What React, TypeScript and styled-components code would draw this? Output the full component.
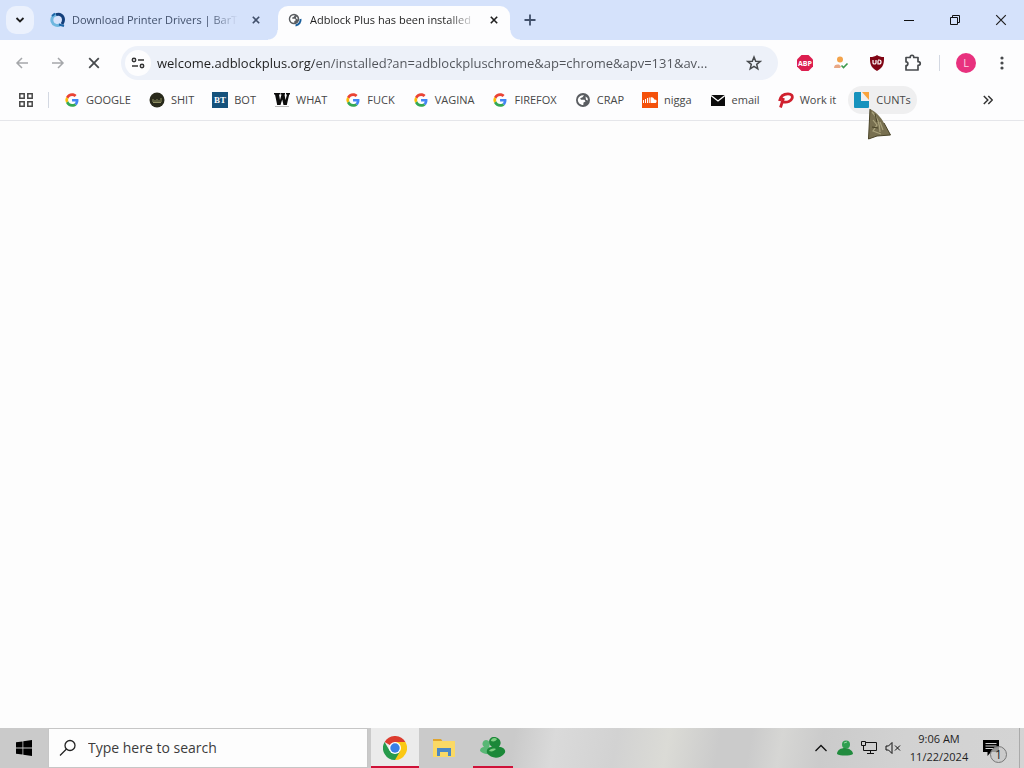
import React from 'react';
import styled, { createGlobalStyle } from 'styled-components';

const Global = createGlobalStyle`
  * { box-sizing: border-box; }
  body { margin: 0; background: #fdfdfd; font-family: "Open Sans", "Noto Sans", sans-serif; color: #1f1f1f; }
  button, input { font: inherit; color: inherit; border: 0; padding: 0; margin: 0; background: none; }
  svg { display: block; flex: none; }
`;

const Window = styled.div`
  min-height: 100vh;
  display: flex;
  flex-direction: column;
`;

const TabStrip = styled.header`
  height: 40px;
  display: flex;
  align-items: center;
  background: #d5e2fb;
  padding-left: 6px;
`;

const TabSearch = styled.button`
  width: 28px;
  height: 28px;
  border-radius: 10px;
  background: #ebf1fd;
  display: grid;
  place-items: center;
`;

const Tab = styled.div<{ $active?: boolean }>`
  position: relative;
  align-self: flex-end;
  flex: 0 1 232px;
  min-width: 0;
  height: 34px;
  margin-left: 6px;
  padding: 0 8px 6px 10px;
  display: flex;
  align-items: center;
  gap: 6px;
  border-radius: 10px 10px 0 0;
  background: ${p => (p.$active ? '#fdfdfe' : 'transparent')};
  color: ${p => (p.$active ? '#1f1f1f' : '#41506b')};
  &::before, &::after {
    content: "";
    display: ${p => (p.$active ? 'block' : 'none')};
    position: absolute;
    bottom: 0;
    width: 10px;
    height: 10px;
  }
  &::before { left: -10px; background: radial-gradient(circle at 0 0, transparent 9px, #fdfdfe 10px); }
  &::after { right: -10px; background: radial-gradient(circle at 100% 0, transparent 9px, #fdfdfe 10px); }
`;

const TabTitle = styled.span`
  flex: 1;
  min-width: 0;
  overflow: hidden;
  white-space: nowrap;
  font-size: 11px;
  line-height: 16px;
  mask-image: linear-gradient(to right, #000 calc(100% - 28px), transparent);
`;

const TabClose = styled.button`
  width: 16px;
  height: 16px;
  margin-left: 4px;
  display: grid;
  place-items: center;
`;

const NewTab = styled.button`
  width: 28px;
  height: 28px;
  margin-left: 6px;
  display: grid;
  place-items: center;
  color: #41506b;
`;

const WindowControls = styled.div`
  margin-left: auto;
  display: flex;
`;

const WindowButton = styled.button`
  width: 46px;
  height: 40px;
  display: grid;
  place-items: center;
`;

const Toolbar = styled.div`
  height: 46px;
  display: flex;
  align-items: center;
  padding: 0 4px;
  background: #fdfdfe;
`;

const ToolButton = styled.button`
  flex: none;
  width: 36px;
  height: 34px;
  display: grid;
  place-items: center;
  color: #474a4d;
  &:disabled { color: #a5a7aa; }
`;

const Omnibox = styled.form`
  flex: 1;
  min-width: 0;
  height: 34px;
  margin: 0 9px;
  display: flex;
  align-items: center;
  border-radius: 17px;
  background: #edf1f9;
  padding: 0 6px 0 4px;
`;

const SiteInfo = styled.button`
  flex: none;
  width: 26px;
  height: 26px;
  border-radius: 50%;
  background: #fdfdfe;
  display: grid;
  place-items: center;
`;

const Address = styled.input`
  flex: 1;
  min-width: 0;
  margin-left: 6px;
  font-size: 13px;
  line-height: 20px;
  outline: none;
  color: transparent;
  background: linear-gradient(to right, #1f1f1f 157px, #505359 157px);
  background-clip: text;
  -webkit-background-clip: text;
  text-overflow: ellipsis;
`;

const Divider = styled.span`
  flex: none;
  width: 1px;
  height: 16px;
  background: #d3d8e2;
  margin: 0 8px;
`;

const Avatar = styled.span`
  width: 20px;
  height: 20px;
  border-radius: 50%;
  background: #e8317e;
  color: #fbd3e4;
  font-size: 11px;
  line-height: 20px;
  text-align: center;
`;

const BookmarkBar = styled.nav`
  height: 35px;
  display: flex;
  align-items: flex-start;
  padding: 0 18px 0 8px;
  background: #fdfdfe;
  border-bottom: 1px solid #e5e6ea;
  color: #474747;
`;

const BarButton = styled.button`
  width: 36px;
  height: 28px;
  display: grid;
  place-items: center;
`;

const BarDivider = styled(Divider)`
  margin: 6px 9px 6px 4px;
`;

const Bookmarks = styled.div`
  flex: 1;
  min-width: 0;
  display: flex;
  gap: 6px;
`;

const Bookmark = styled.a<{ $hover?: boolean }>`
  flex: none;
  height: 28px;
  display: flex;
  align-items: center;
  gap: 6px;
  padding: 0 6px;
  border-radius: 14px;
  background: ${p => (p.$hover ? '#efeff0' : 'transparent')};
  color: inherit;
  text-decoration: none;
  font-size: 11px;
  line-height: 16px;
  white-space: nowrap;
`;

const Page = styled.main`
  flex: 1;
  background: #fdfdfd;
`;

const Pointer = styled.svg`
  position: absolute;
  left: 867px;
  top: 108px;
  pointer-events: none;
`;

const Taskbar = styled.footer`
  height: 40px;
  display: flex;
  background: linear-gradient(100deg, #cacaca 50%, #dadada 54%, #d2d2d2 60%, #dbdbd6 65%, #cbcbcb 70%, #cbcbcb 73%, #d6d6d4 76%, #cbcbcb 80%, #d2d2d2 88%, #d4d4d4);
`;

const StartButton = styled.button`
  width: 48px;
  display: grid;
  place-items: center;
`;

const SearchBox = styled.label`
  flex: 0 1 320px;
  min-width: 0;
  display: flex;
  align-items: center;
  gap: 11px;
  padding-left: 10px;
  margin-right: 3px;
  background: #fdfdfd;
  border: 1px solid #c6c6c6;
`;

const SearchInput = styled.input`
  flex: 1;
  min-width: 0;
  font-size: 14px;
  line-height: 20px;
  outline: none;
  &::placeholder { color: #3c3c3c; opacity: 1; }
`;

const TaskButton = styled.button<{ $active?: boolean; $running?: boolean }>`
  position: relative;
  width: 48px;
  margin-right: 1px;
  display: grid;
  place-items: center;
  background: ${p => (p.$active ? '#ebebeb' : 'transparent')};
  &::after {
    content: "";
    position: absolute;
    bottom: 0;
    left: ${p => (p.$active ? '0' : '4px')};
    right: ${p => (p.$active ? '0' : '4px')};
    height: 2px;
    background: ${p => (p.$active || p.$running ? '#cf1138' : 'transparent')};
  }
`;

const Tray = styled.div`
  margin-left: auto;
  display: flex;
  align-items: center;
`;

const TrayButton = styled.button`
  width: 24px;
  height: 40px;
  display: grid;
  place-items: center;
`;

const Clock = styled.time`
  width: 68px;
  text-align: center;
  font-size: 11px;
  line-height: 18px;
  white-space: nowrap;
`;

const ActionCenter = styled.button`
  position: relative;
  width: 46px;
  height: 40px;
  padding-right: 10px;
  display: grid;
  place-items: center;
`;

const Badge = styled.span`
  position: absolute;
  right: 12px;
  bottom: 5px;
  width: 17px;
  height: 17px;
  border: 1px solid #777;
  border-radius: 50%;
  background: rgba(200, 200, 200, 0.75);
  font-size: 12px;
  line-height: 15px;
  text-align: center;
`;

const ShowDesktop = styled.button`
  width: 5px;
  height: 40px;
  border-left: 1px solid #aaa;
`;

const Cross = ({ s = 8, w = 2 }: { s?: number; w?: number }) => (
  <svg width={s} height={s} viewBox="0 0 10 10" stroke="currentColor" strokeWidth={w} fill="none">
    <path d="M1 1l8 8M9 1L1 9" />
  </svg>
);

const Google = () => (
  <svg width="16" height="16" viewBox="0 0 48 48">
    <g transform="translate(4 4) scale(.84)">
      <path fill="#EA4335" d="M24 9.5c3.54 0 6.71 1.22 9.21 3.6l6.85-6.85C35.9 2.38 30.47 0 24 0 14.62 0 6.51 5.38 2.56 13.22l7.98 6.19C12.43 13.72 17.74 9.5 24 9.5z" />
      <path fill="#4285F4" d="M46.98 24.55c0-1.57-.15-3.09-.38-4.55H24v9.02h12.94c-.58 2.96-2.26 5.48-4.78 7.18l7.73 6c4.51-4.18 7.09-10.36 7.09-17.65z" />
      <path fill="#FBBC05" d="M10.53 28.59a14.5 14.5 0 0 1 0-9.18l-7.98-6.19a24 24 0 0 0 0 21.56z" />
      <path fill="#34A853" d="M24 48c6.48 0 11.93-2.13 15.89-5.81l-7.73-6c-2.15 1.45-4.92 2.3-8.16 2.3-6.26 0-11.57-4.22-13.47-9.91l-7.98 6.19C6.51 42.62 14.62 48 24 48z" />
    </g>
  </svg>
);

const DarkDisc = () => (
  <svg width="16" height="16" viewBox="0 0 16 16">
    <circle cx="8" cy="8" r="7.5" fill="#292a1b" />
    <path d="M4 7v3M6 8v2M8 7v3M10 8v2M12 6v4M4 10.5h8" stroke="#8f8f63" fill="none" />
  </svg>
);

const BtIcon = () => (
  <svg width="16" height="16" viewBox="0 0 16 16">
    <path fill="#15527c" d="M0 0h16v16H0z" />
    <text x="8" y="11" textAnchor="middle" fontFamily="Liberation Serif, serif" fontWeight="700" fontSize="9" fill="#fff">BT</text>
  </svg>
);

const WIcon = () => (
  <svg width="16" height="16" viewBox="0 0 16 16">
    <path d="M0 1h6v1.500H5l1 5.500 1.500-5.500H6.500V1H11v1.500h-.5l1 5.500L13 2.500h-1V1h4v1.500h-.8L12.800 13H9.500L8.200 7.500 6.500 13H3.200L1 2.500H0z" fill="#0c0c0c" />
    <path d="M1 14.500h14" stroke="#bbb" />
  </svg>
);

const GlobeShape = () => (
  <>
    <circle cx="8" cy="8" r="7" fill="#5a5d61" />
    <path d="M2.800 7.500C3.500 4.500 6 2.800 9 3.200L7.500 5.200 5.200 6.200 6 7.800H9.500L10.500 9.500 8.500 10.500 8.300 13C5 13 2.800 10.500 2.800 7.500zM10.500 4.500l2 1.500.5 2.500-2-.8z" fill="#fff" />
  </>
);

const Globe = () => <svg width="16" height="16" viewBox="0 0 16 16"><GlobeShape /></svg>;

const Cloud = () => (
  <svg width="16" height="16" viewBox="0 0 16 16">
    <path fill="#f4510b" d="M0 0h16v16H0z" />
    <path d="M1.500 8v3M3.500 7v4M5.500 6v5M7.300 5.500V11" stroke="#fff" fill="none" />
    <path d="M8.500 5.500c2-.8 3.500.5 3.800 2 3-.5 3 3.500.7 3.500H8.500z" fill="#fff" />
  </svg>
);

const Mail = () => (
  <svg width="16" height="16" viewBox="0 0 16 16">
    <path fill="#0c0c0c" d="M1 3h14v11H1z" />
    <path d="M1 3.500l7 5.500 7-5.500" stroke="#fff" strokeWidth="1.300" fill="none" />
  </svg>
);

const PIcon = () => (
  <svg width="16" height="16" viewBox="0 0 16 16">
    <path d="M2.500 15.500L5.500 6M1.500 9C2.500 4 6 1.800 10 1.800c3.500 0 5 2.200 4 4.700C13 9 9.500 10.800 5.500 9.800" stroke="#d0202e" strokeWidth="2.800" fill="none" />
  </svg>
);

const BlueFold = () => (
  <svg width="16" height="16" viewBox="0 0 16 16">
    <path fill="#1692bd" d="M1 0h6v9h8v6a1 1 0 0 1-1 1H1a1 1 0 0 1-1-1V1z" />
    <path fill="#f9a33c" d="M8 0h7v8z" />
  </svg>
);

const bookmarks: { label: string; icon: React.ReactNode; hover?: boolean }[] = [
  { label: 'GOOGLE', icon: <Google /> },
  { label: 'SHIT', icon: <DarkDisc /> },
  { label: 'BOT', icon: <BtIcon /> },
  { label: 'WHAT', icon: <WIcon /> },
  { label: 'FUCK', icon: <Google /> },
  { label: 'VAGINA', icon: <Google /> },
  { label: 'FIREFOX', icon: <Google /> },
  { label: 'CRAP', icon: <Globe /> },
  { label: 'nigga', icon: <Cloud /> },
  { label: 'email', icon: <Mail /> },
  { label: 'Work it', icon: <PIcon /> },
  { label: 'CUNTs', icon: <BlueFold />, hover: true },
];

export default function App() {
  return (
    <Window>
      <Global />
      <TabStrip>
        <TabSearch aria-label="Search tabs">
          <svg width="10" height="10" viewBox="0 0 10 10" fill="none" stroke="#1f1f1f" strokeWidth="1.800"><path d="M1.500 3L5 6.500 8.500 3" /></svg>
        </TabSearch>
        <Tab>
          <svg width="16" height="16" viewBox="0 0 16 16" fill="none">
            <path d="M7.500 2.500a5.500 5.500 0 1 0 3 10" stroke="#6fb7df" strokeWidth="3" />
            <path d="M6 2.700c4-1.500 7.500 1 7.500 5 0 2-.5 3-1.500 4.500" stroke="#14407c" strokeWidth="3" />
            <path d="M2 4l3-2.500M9 12.500l5 1.500" stroke="#1c66a8" strokeWidth="2" />
          </svg>
          <TabTitle>Download Printer Drivers | BarT</TabTitle>
          <TabClose aria-label="Close tab"><Cross /></TabClose>
        </Tab>
        <Tab $active>
          <svg width="16" height="16" viewBox="0 0 16 16">
            <g transform="translate(0 1) scale(.75)"><GlobeShape /></g>
            <path d="M12.500 7c.5 3-1.500 6-5 6.500" stroke="#1a5f9d" strokeWidth="2" fill="none" />
          </svg>
          <TabTitle>Adblock Plus has been installed</TabTitle>
          <TabClose aria-label="Close tab"><Cross /></TabClose>
        </Tab>
        <NewTab aria-label="New tab">
          <svg width="12" height="12" viewBox="0 0 12 12" stroke="currentColor" strokeWidth="1.800"><path d="M6 .5v11M.5 6h11" /></svg>
        </NewTab>
        <WindowControls>
          <WindowButton aria-label="Minimize"><svg width="10" height="10" viewBox="0 0 10 10" stroke="#111"><path d="M0 5.500h10" /></svg></WindowButton>
          <WindowButton aria-label="Restore"><svg width="10" height="10" viewBox="0 0 10 10" stroke="#111" fill="none"><path d="M.5 2.500h7v7h-7zM2.500 2.500v-2h7v7h-2" /></svg></WindowButton>
          <WindowButton aria-label="Close"><Cross s={12} w={1} /></WindowButton>
        </WindowControls>
      </TabStrip>

      <Toolbar>
        <ToolButton disabled aria-label="Back"><svg width="14" height="12" viewBox="0 0 14 12" fill="none" stroke="currentColor" strokeWidth="1.500"><path d="M13 6H2M7 1L2 6l5 5" /></svg></ToolButton>
        <ToolButton disabled aria-label="Forward"><svg width="14" height="12" viewBox="0 0 14 12" fill="none" stroke="currentColor" strokeWidth="1.500"><path d="M1 6h11M7 1l5 5-5 5" /></svg></ToolButton>
        <ToolButton aria-label="Stop"><Cross s={12} w={1.5} /></ToolButton>
        <Omnibox>
          <SiteInfo type="button" aria-label="Site information">
            <svg width="14" height="14" viewBox="0 0 14 14" fill="none" stroke="#333" strokeWidth="1.500"><circle cx="3" cy="4" r="1.700" /><path d="M7 4h6M1 10h6" /><circle cx="11" cy="10" r="1.700" /></svg>
          </SiteInfo>
          <Address aria-label="Address" defaultValue="welcome.adblockplus.org/en/installed?an=adblockpluschrome&ap=chrome&apv=131&av..." />
          <ToolButton type="button" aria-label="Bookmark this page">
            <svg width="16" height="16" viewBox="0 0 16 16" fill="none" stroke="currentColor" strokeWidth="1.500"><path d="M8 2l1.700 4.200 4.500.3-3.500 2.900 1.100 4.400L8 11.400l-3.800 2.400 1.100-4.400-3.500-2.900 4.500-.3z" /></svg>
          </ToolButton>
        </Omnibox>
        <ToolButton aria-label="Adblock Plus">
          <svg width="18" height="18" viewBox="0 0 18 18"><path fill="#dc1e4f" d="M5.500 1h7L17 5.500v7L12.500 17h-7L1 12.500v-7z" /><text x="9" y="12" textAnchor="middle" fontWeight="700" fontSize="7" fill="#fff">ABP</text></svg>
        </ToolButton>
        <ToolButton aria-label="Account extension">
          <svg width="16" height="16" viewBox="0 0 16 16" fill="none"><circle cx="7" cy="4.500" r="3" fill="#f3a34b" /><path d="M1 13c0-3 2-4 5-3.500l2 2-1 1.500z" fill="#e9a785" /><path d="M8.500 10.500l2 2 4-4" stroke="#3e9b4e" strokeWidth="1.600" /></svg>
        </ToolButton>
        <ToolButton aria-label="uBlock">
          <svg width="16" height="16" viewBox="0 0 16 16"><path fill="#800514" d="M8 0c2 1.500 4 2 7 2 0 6 0 10-7 14C1 12 1 8 1 2c3 0 5-.5 7-2z" /><path d="M4 5v3q0 1 1.500 1T7 8V5M9 5.500v3.500h1q2 0 2-2t-2-2H9" stroke="#fff" strokeWidth="1.200" fill="none" /></svg>
        </ToolButton>
        <ToolButton aria-label="Extensions">
          <svg width="18" height="18" viewBox="0 0 18 18" fill="none" stroke="currentColor" strokeWidth="1.700" strokeLinejoin="round"><path d="M2 3.500h4.200c0-3 3.600-3 3.600 0H14v4.200c3 0 3 3.600 0 3.600V16H2v-4.300c2.500 0 2.500-3.900 0-3.900z" /></svg>
        </ToolButton>
        <Divider />
        <ToolButton aria-label="Profile"><Avatar>L</Avatar></ToolButton>
        <ToolButton aria-label="Menu"><svg width="4" height="16" viewBox="0 0 4 16" fill="currentColor"><circle cx="2" cy="3" r="1.600" /><circle cx="2" cy="8" r="1.600" /><circle cx="2" cy="13" r="1.600" /></svg></ToolButton>
      </Toolbar>

      <BookmarkBar>
        <BarButton aria-label="Apps">
          <svg width="14" height="14" viewBox="0 0 14 14" fill="none" stroke="#474747" strokeWidth="1.500"><path d="M.8.800h4.400v4.400H.8zM8.800.800h4.400v4.400H8.800zM.8 8.800h4.400v4.400H.8zM8.800 8.800h4.400v4.400H8.800z" /></svg>
        </BarButton>
        <BarDivider />
        <Bookmarks>
          {bookmarks.map(b => (
            <Bookmark key={b.label} href="#" $hover={b.hover}>{b.icon}{b.label}</Bookmark>
          ))}
        </Bookmarks>
        <BarButton aria-label="More bookmarks">
          <svg width="10" height="10" viewBox="0 0 10 10" fill="none" stroke="#333" strokeWidth="1.500"><path d="M.8 1l4 4-4 4M5.300 1l4 4-4 4" /></svg>
        </BarButton>
      </BookmarkBar>

      <Page />

      <Taskbar>
        <StartButton aria-label="Start">
          <svg width="16" height="16" viewBox="0 0 16 16" fill="#000"><path d="M0 2.300l6.500-.9v6.200H0zM7.300 1.300L16 0v7.600H7.300zM0 8.400h6.500v6.200L0 13.700zM7.300 8.400H16V16l-8.700-1.300z" /></svg>
        </StartButton>
        <SearchBox>
          <svg width="18" height="18" viewBox="0 0 18 18" fill="none" stroke="#222" strokeWidth="1.300"><circle cx="11" cy="6.500" r="5" /><path d="M7.500 10L1 16.500" /></svg>
          <SearchInput aria-label="Search" placeholder="Type here to search" />
        </SearchBox>
        <TaskButton $active aria-label="Chrome">
          <svg width="24" height="24" viewBox="0 0 24 24">
            <path fill="#dc3b2e" d="M12 12L1.600 6A12 12 0 0 1 22.400 6z" />
            <path fill="#fbc814" d="M12 12V6h10.400A12 12 0 0 1 12 24z" />
            <path fill="#279a4b" d="M1.600 6A12 12 0 0 0 12 24l5.200-9L12 12 6.800 15z" />
            <circle cx="12" cy="12" r="6" fill="#fff" /><circle cx="12" cy="12" r="4.700" fill="#397fe6" />
          </svg>
        </TaskButton>
        <TaskButton aria-label="File Explorer">
          <svg width="24" height="24" viewBox="0 0 24 24"><path fill="#e0a52e" d="M1 3h8l2 3H1z" /><path fill="#fad965" d="M1 5h22v16H1z" /><path fill="#4c88c4" d="M5 12h14v8h-3v-4H8v4H5z" /></svg>
        </TaskButton>
        <TaskButton $running aria-label="Messenger">
          <svg width="26" height="24" viewBox="0 0 26 24">
            <path fill="#58b774" d="M0 15c0-3 2-4 4-4-3-3-1-7 2-7 3 0 5 3 3 7 3 1 5 3 5 6-3 2-10 2-14-2z" />
            <path fill="#1b8838" d="M7 17c-1-4 2-6 5-6-5-4-3-10 2-10s9 5 5 10c5 0 8 4 5 7-4 5-13 5-17-1z" />
            <path fill="#7fce83" d="M11 5c0-3 4-4 6-2-1 2-3 3-6 2zM9 15c1-2 4-3 7-2-2 2-4 3-7 2z" />
          </svg>
        </TaskButton>
        <Tray>
          <TrayButton aria-label="Hidden icons"><svg width="12" height="8" viewBox="0 0 12 8" fill="none" stroke="#111" strokeWidth="1.300"><path d="M.5 7L6 1.500 11.500 7" /></svg></TrayButton>
          <TrayButton aria-label="Messenger status"><svg width="16" height="16" viewBox="0 0 16 16"><circle cx="9" cy="4.500" r="4" fill="#2f9f50" /><path d="M0 14c0-4 4-6 8-6s8 3 8 6c-3 2-13 2-16 0z" fill="#218b3e" /><path d="M7 3l3-1" stroke="#98d9a5" /></svg></TrayButton>
          <TrayButton aria-label="Network"><svg width="16" height="16" viewBox="0 0 16 16" fill="none" stroke="#111"><path d="M4 2.500h11.500v8H4.500M9.500 10.500v3M6 13.500h7M.5 1.500h4v4h-4zM2.500 5.500v5H5" /></svg></TrayButton>
          <TrayButton aria-label="Muted"><svg width="16" height="16" viewBox="0 0 16 16" fill="none" stroke="#111"><path d="M1 6h2.500L7 2.500v11L3.500 10H1zM10 5.500l5 5M15 5.500l-5 5" /></svg></TrayButton>
          <Clock>9:06 AM<br />11/22/2024</Clock>
          <ActionCenter aria-label="Notifications">
            <svg width="16" height="16" viewBox="0 0 16 16"><path fill="#000" d="M0 0h16v12H8l-3.500 4v-4H0z" /><path d="M2.500 3.500h11M2.500 6h11M2.500 8.500h8" stroke="#d0d0d0" /></svg>
            <Badge>1</Badge>
          </ActionCenter>
          <ShowDesktop aria-label="Show desktop" />
        </Tray>
      </Taskbar>

      <Pointer width="26" height="32" viewBox="0 0 26 32" aria-hidden="true">
        <path d="M3 1C8 3 14 9 17 15L23.500 27 10 28 1.500 31z" fill="#787050" />
        <path d="M5 4q8 8 8 20M6 12l4 5-4 6 8 3M13 14l3 8" stroke="#aaa37c" strokeWidth="1.200" fill="none" />
        <path d="M3 1L1.500 31l8.500-3L23.500 27 17 15M8 6l2 8M5 19l6 1" stroke="#494327" fill="none" />
      </Pointer>
    </Window>
  );
}
